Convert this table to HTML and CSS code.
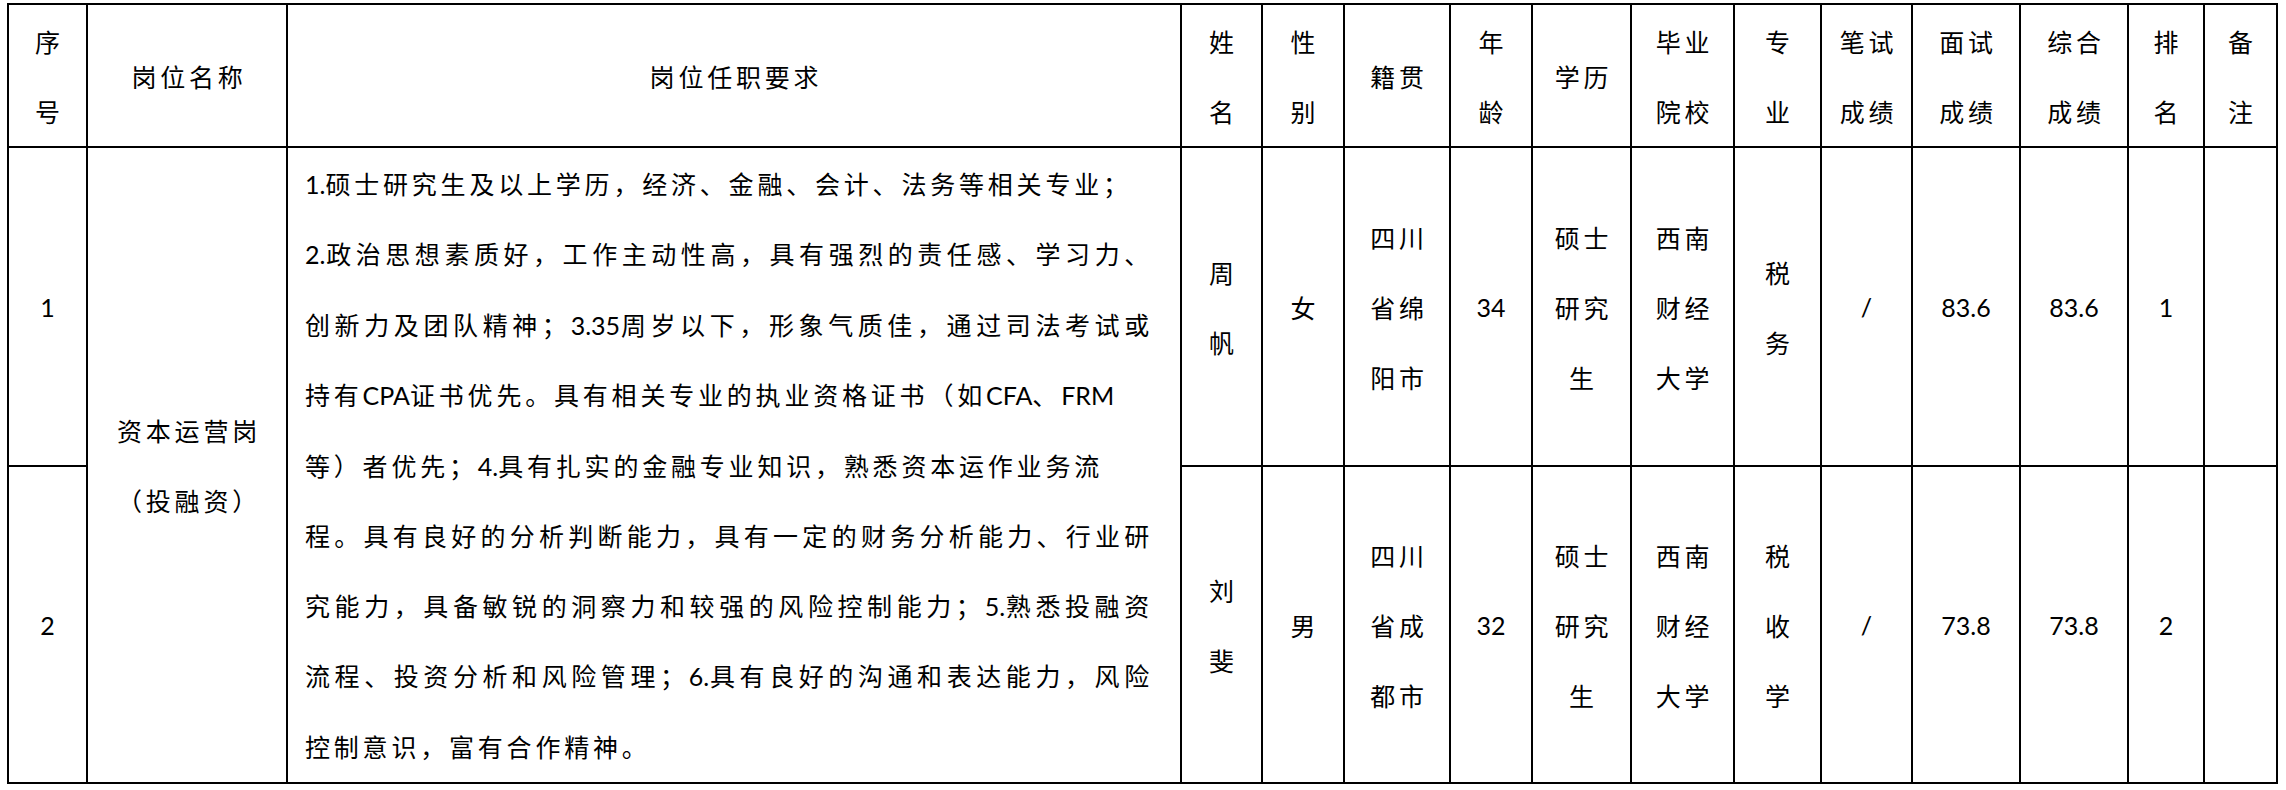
FILE: index.html
```html
<!DOCTYPE html>
<html lang="zh-CN">
<head>
<meta charset="utf-8">
<title>岗位表</title>
<link rel="stylesheet" href="styles.css">
</head>
<body>
<table class="sheet">
  <colgroup>
    <col class="w79"><col class="w200"><col class="w894"><col class="w81"><col class="w82">
    <col class="w106"><col class="w82"><col class="w99"><col class="w103"><col class="w87">
    <col class="w91"><col class="w108"><col class="w108"><col class="w76"><col class="w73">
  </colgroup>
  <thead>
    <tr class="head">
      <th>序<br>号</th>
      <th>岗位名称</th>
      <th>岗位任职要求</th>
      <th>姓<br>名</th>
      <th>性<br>别</th>
      <th>籍贯</th>
      <th>年<br>龄</th>
      <th>学历</th>
      <th>毕业<br>院校</th>
      <th>专<br>业</th>
      <th>笔试<br>成绩</th>
      <th>面试<br>成绩</th>
      <th>综合<br>成绩</th>
      <th>排<br>名</th>
      <th>备<br>注</th>
    </tr>
  </thead>
  <tbody>
    <tr class="r1">
      <td class="num">1</td>
      <td class="post" rowspan="2">资本运营岗<br>（投融资）</td>
      <td class="req" rowspan="2">
        <div class="ln"><span class="lat">1.</span>硕士研究生及以上学历，经济、金融、会计、法务等相关专业；</div>
        <div class="ln j"><span class="lat">2.</span>政治思想素质好，工作主动性高，具有强烈的责任感、学习力、</div>
        <div class="ln j">创新力及团队精神；<span class="lat">3.35</span>周岁以下，形象气质佳，通过司法考试或</div>
        <div class="ln">持有<span class="lat">CPA</span>证书优先。具有相关专业的执业资格证书（如<span class="lat">CFA</span>、<span class="lat">FRM</span></div>
        <div class="ln">等）者优先；<span class="lat">4.</span>具有扎实的金融专业知识，熟悉资本运作业务流</div>
        <div class="ln j">程。具有良好的分析判断能力，具有一定的财务分析能力、行业研</div>
        <div class="ln j">究能力，具备敏锐的洞察力和较强的风险控制能力；<span class="lat">5.</span>熟悉投融资</div>
        <div class="ln j">流程、投资分析和风险管理；<span class="lat">6.</span>具有良好的沟通和表达能力，风险</div>
        <div class="ln">控制意识，富有合作精神。</div>
      </td>
      <td>周<br>帆</td>
      <td>女</td>
      <td>四川<br>省绵<br>阳市</td>
      <td class="num">34</td>
      <td>硕士<br>研究<br>生</td>
      <td>西南<br>财经<br>大学</td>
      <td>税<br>务</td>
      <td class="num slash">/</td>
      <td class="num">83.6</td>
      <td class="num">83.6</td>
      <td class="num">1</td>
      <td></td>
    </tr>
    <tr class="r2">
      <td class="num">2</td>
      <td>刘<br>斐</td>
      <td>男</td>
      <td>四川<br>省成<br>都市</td>
      <td class="num">32</td>
      <td>硕士<br>研究<br>生</td>
      <td>西南<br>财经<br>大学</td>
      <td>税<br>收<br>学</td>
      <td class="num slash">/</td>
      <td class="num">73.8</td>
      <td class="num">73.8</td>
      <td class="num">2</td>
      <td></td>
    </tr>
  </tbody>
</table>
</body>
</html>
```

FILE: styles.css
```css
html, body {
  margin: 0;
  background: #ffffff;
}

body {
  padding: 3px 0 0 7px;
  font-family: Lato, "Noto Sans CJK SC", sans-serif;
  color: #000000;
}

.sheet {
  border-collapse: collapse;
  table-layout: fixed;
  width: 2270px;
}

.w79 { width: 79px; }
.w200 { width: 200px; }
.w894 { width: 894px; }
.w81 { width: 81px; }
.w82 { width: 82px; }
.w106 { width: 106px; }
.w99 { width: 99px; }
.w103 { width: 103px; }
.w87 { width: 87px; }
.w91 { width: 91px; }
.w108 { width: 108px; }
.w76 { width: 76px; }
.w73 { width: 73px; }

.sheet th,
.sheet td {
  border: 2px solid #000000;
  padding: 0 0 0 4px;
  text-align: center;
  vertical-align: middle;
  font-size: 25px;
  line-height: 70px;
  letter-spacing: 3.8px;
  font-weight: 400;
  font-family: "Noto Sans CJK SC", sans-serif;
}

.head { height: 143px; }
.r1 { height: 319px; }
.r2 { height: 317px; }

.sheet td.num {
  font-family: Lato, "Noto Sans CJK SC", sans-serif;
  font-size: 25px;
  letter-spacing: 0;
  padding: 0;
}

.sheet td.req {
  text-align: left;
  padding: 0 0 0 17px;
  line-height: 69.5px;
}

.ln {
  width: 848px;
}

.ln.j {
  text-align: justify;
  text-align-last: justify;
}

.lat {
  font-family: Lato, sans-serif;
  font-size: 25px;
  letter-spacing: 0;
}
```
